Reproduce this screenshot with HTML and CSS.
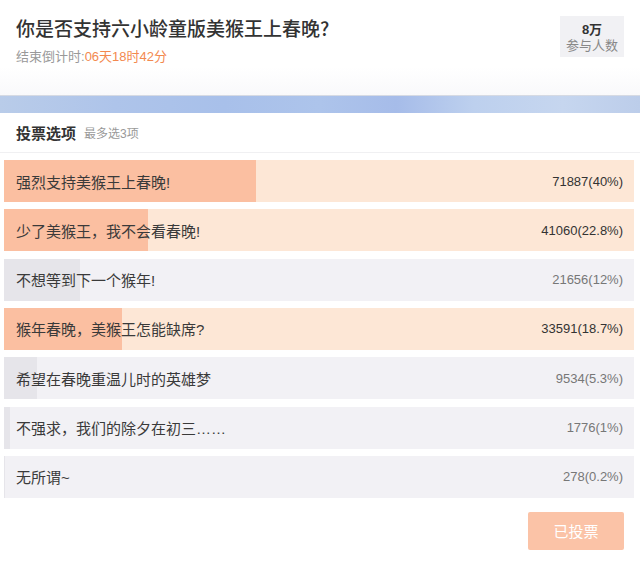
FILE: index.html
```html
<!DOCTYPE html>
<html lang="zh-CN">
<head>
<meta charset="utf-8">
<title>投票</title>
<link rel="stylesheet" href="styles.css">
</head>
<body>
<div class="page">
  <header class="head">
    <div class="head-main">
      <h1 class="title">你是否支持六小龄童版美猴王上春晚?</h1>
      <div class="countdown">结束倒计时:<span class="time">06天18时42分</span></div>
    </div>
    <div class="stat">
      <div class="stat-num">8万</div>
      <div class="stat-label">参与人数</div>
    </div>
  </header>
  <div class="band"></div>
  <div class="section-head">
    <span class="section-title">投票选项</span>
    <span class="section-note">最多选3项</span>
  </div>
  <ul class="options">
    <li class="option picked"><span class="fill" style="width:40%"></span><span class="name">强烈支持美猴王上春晚!</span><span class="count">71887(40%)</span></li>
    <li class="option picked"><span class="fill" style="width:22.8%"></span><span class="name">少了美猴王，我不会看春晚!</span><span class="count">41060(22.8%)</span></li>
    <li class="option"><span class="fill" style="width:12%"></span><span class="name">不想等到下一个猴年!</span><span class="count">21656(12%)</span></li>
    <li class="option picked"><span class="fill" style="width:18.7%"></span><span class="name">猴年春晚，美猴王怎能缺席?</span><span class="count">33591(18.7%)</span></li>
    <li class="option"><span class="fill" style="width:5.3%"></span><span class="name">希望在春晚重温儿时的英雄梦</span><span class="count">9534(5.3%)</span></li>
    <li class="option"><span class="fill" style="width:1%"></span><span class="name">不强求，我们的除夕在初三……</span><span class="count">1776(1%)</span></li>
    <li class="option"><span class="fill" style="width:0.2%"></span><span class="name">无所谓~</span><span class="count">278(0.2%)</span></li>
  </ul>
  <div class="actions">
    <button class="voted" type="button">已投票</button>
  </div>
</div>
</body>
</html>
```
FILE: styles.css
```css
* { box-sizing: border-box; }
html, body { margin: 0; padding: 0; background: #fff; }
body {
  font-family: "Liberation Sans", "Noto Sans CJK SC", sans-serif;
  color: #333;
  width: 640px;
  height: 561px;
  overflow: hidden;
}
.head {
  height: 95px;
  display: flex;
  justify-content: space-between;
  align-items: flex-start;
  padding: 16px 16px 0 16px;
  background: linear-gradient(#ffffff 0%, #ffffff 70%, #f9f9fb 100%);
}
.title {
  margin: 0;
  font-family: "Noto Sans CJK SC", sans-serif;
  font-size: 19px;
  line-height: 24px;
  font-weight: 500;
  color: #333;
}
.countdown {
  margin-top: 8px;
  font-size: 13px;
  line-height: 18px;
  color: #999;
}
.time { color: #f3894f; }
.stat {
  width: 64px;
  height: 41px;
  background: #f1f1f4;
  text-align: center;
  padding-top: 6px;
}
.stat-num {
  font-size: 13px;
  line-height: 16px;
  font-weight: 700;
  color: #333;
}
.stat-label {
  font-size: 13px;
  line-height: 16px;
  color: #888;
}
.band {
  height: 18px;
  border-top: 1px solid #d6dae3;
  background: linear-gradient(90deg, #b9cce9 0%, #aec4ea 18%, #a8c0ea 35%, #adc4eb 50%, #a6bce9 62%, #bdd0ee 74%, #c6d6ef 88%, #bccdea 100%);
}
.section-head {
  height: 40px;
  display: flex;
  align-items: center;
  gap: 8px;
  padding: 0 16px;
  border-bottom: 1px solid #f0f0f2;
}
.section-title {
  font-size: 15px;
  font-weight: 700;
  color: #333;
}
.section-note {
  font-size: 12px;
  color: #999;
}
.options {
  list-style: none;
  margin: 0;
  padding: 7px 6px 0 4px;
  display: flex;
  flex-direction: column;
  gap: 7.33px;
}
.option {
  position: relative;
  height: 42px;
  display: flex;
  align-items: center;
  justify-content: space-between;
  padding: 0 11px 0 12px;
  background: #f2f1f5;
}
.option .fill {
  position: absolute;
  left: 0;
  top: 0;
  bottom: 0;
  background: #e6e5ea;
}
.option.picked { background: #fde7d6; }
.option.picked .fill { background: #fbbfa1; }
.name, .count { position: relative; }
.name {
  font-size: 15px;
  color: #3a3a3a;
}
.count {
  font-size: 13px;
  color: #777;
}
.option.picked .count { color: #333; }
.actions {
  display: flex;
  justify-content: flex-end;
  padding: 14px 16px 0 0;
}
.voted {
  width: 96px;
  height: 38px;
  border: 0;
  border-radius: 2px;
  background: #fbc3a7;
  color: #fff;
  font-family: "Noto Sans CJK SC", sans-serif;
  font-size: 15px;
}
```
